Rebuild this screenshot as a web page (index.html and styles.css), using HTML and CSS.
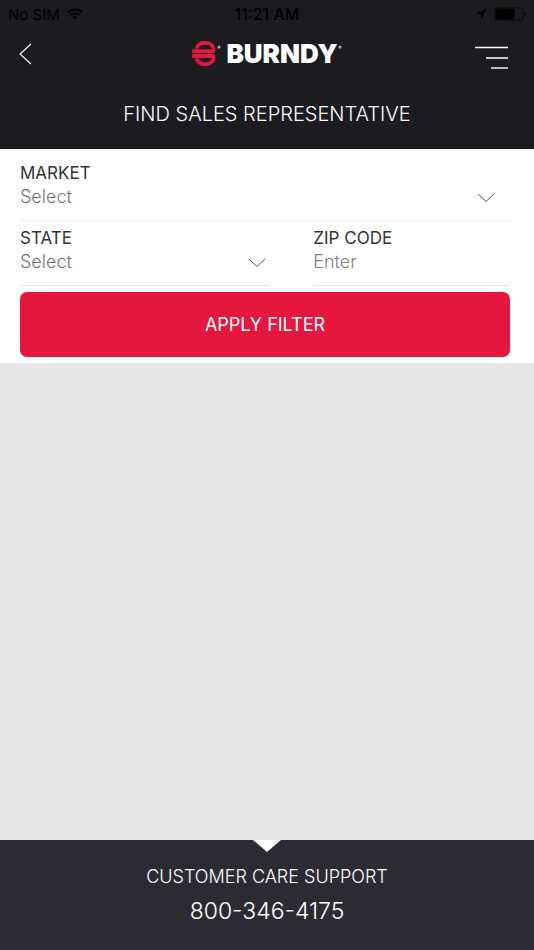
FILE: index.html
```html
<!DOCTYPE html>
<html lang="en">
<head>
<meta charset="utf-8">
<meta name="viewport" content="width=device-width, initial-scale=1">
<title>Find Sales Representative</title>
<link rel="stylesheet" href="styles.css">
</head>
<body>
<header class="header">
  <div class="status">
    <div class="status-left">
      <span>No SIM</span>
      <svg width="16" height="12" viewBox="0 0 16 12" aria-hidden="true"><g fill="none" stroke="#000" stroke-width="2"><path d="M1 4.300a10 10 0 0 1 14 0"/><path d="M3.700 7.200a6.200 6.200 0 0 1 8.600 0"/></g><path d="M5.500 9.200a3.600 3.600 0 0 1 5 0L8 11.800z"/></svg>
    </div>
    <span class="status-time">11:21 AM</span>
    <div class="status-right">
      <svg width="12" height="12" viewBox="0 0 12 12" aria-hidden="true"><path d="M11.500.5 6.400 11.500 6 6 .5 5.600z"/></svg>
      <svg width="32" height="14" viewBox="0 0 32 14" aria-hidden="true"><rect x="1" y="1" width="28" height="12" rx="2" fill="none" stroke="#000" stroke-opacity=".7"/><rect x="1.500" y="1.500" width="19" height="11" rx="1"/><path d="M30.500 5c2 .5 2 3.500 0 4z"/></svg>
    </div>
  </div>
  <nav class="nav">
    <button class="icon-button" type="button" aria-label="Back">
      <svg width="14" height="22" viewBox="0 0 14 22" aria-hidden="true"><path d="M12 1 1 11 12 21" fill="none" stroke="#fff" stroke-width="1.100"/></svg>
    </button>
    <a class="logo" href="#" aria-label="Burndy home">
      <svg width="30" height="26" viewBox="0 0 30 26" aria-hidden="true">
        <g fill="#e6173e"><path d="M2.800 7.500C4 2.500 7.500 0 12 0 19 0 23.400 3.500 23.400 8.300H19.800C19.500 5 17 3.800 13 3.800 9.500 3.800 7.500 4.800 6.800 7.500z"/><path d="M0 8.200H23.400C23.400 10.500 22.800 11.600 22 12.100H.3zM.3 13.100H22C22.800 13.600 23.400 14.700 23.400 16.900H0z"/><path d="M2.800 17.600H6.800C7.500 20.200 9.500 21.200 13 21.200 17 21.200 19.500 20 19.800 16.700H23.400C23.400 21.500 19 25 12 25 7.500 25 4 22.500 2.800 17.600z"/></g>
        <circle cx="27" cy="6" r="1.600" fill="#aaa"/>
      </svg>
      <span class="wordmark">BURNDY</span>
      <svg class="registered" width="4" height="4" viewBox="0 0 4 4" aria-hidden="true"><circle cx="2" cy="2" r="1.600" fill="#aaa"/></svg>
    </a>
    <button class="icon-button menu" type="button" aria-label="Menu">
      <svg width="33" height="24" viewBox="0 0 33 24" aria-hidden="true"><path d="M0 1.500h33M11 12h22" stroke="#fff" stroke-width="1.500"/><path d="M16 22h17" stroke="#bbb" stroke-width="2"/></svg>
    </button>
  </nav>
  <h1 class="title">FIND SALES REPRESENTATIVE</h1>
</header>
<form class="filter">
  <div class="field market">
    <label for="market">MARKET</label>
    <select id="market"><option>Select</option></select>
    <svg class="chevron" width="18" height="10" viewBox="0 0 18 10" aria-hidden="true"><path d="M1 1l8 7.500 8-7.500"/></svg>
  </div>
  <div class="field-row">
    <div class="field">
      <label for="state">STATE</label>
      <select id="state"><option>Select</option></select>
      <svg class="chevron" width="18" height="10" viewBox="0 0 18 10" aria-hidden="true"><path d="M1 1l8 7.500 8-7.500"/></svg>
    </div>
    <div class="field">
      <label for="zip">ZIP CODE</label>
      <input id="zip" type="text" placeholder="Enter">
    </div>
  </div>
  <button class="apply" type="button">APPLY FILTER</button>
</form>
<main class="results"></main>
<footer class="footer">
  <p class="support">CUSTOMER CARE SUPPORT</p>
  <a class="phone" href="tel:800-346-4175">800-346-4175</a>
</footer>
</body>
</html>
```
FILE: styles.css
```css
* {
  box-sizing: border-box;
}

body {
  display: flex;
  flex-direction: column;
  min-height: 100vh;
  margin: 0;
  background: #e6e6e6;
  font-family: Inter, "Liberation Sans", sans-serif;
  font-weight: 300;
}

.header {
  padding-bottom: 21px;
  background: #1c1b20;
  color: #fff;
}

.status {
  display: grid;
  grid-template-columns: 1fr auto 1fr;
  align-items: center;
  height: 28px;
  padding: 0 8px;
  color: #000;
  font-size: 15px;
  font-weight: 400;
}

.status-left,
.status-right {
  display: flex;
  align-items: center;
  gap: 7px;
}

.status-right {
  justify-content: flex-end;
}

.status-time {
  font-size: 16px;
  font-weight: 500;
}

.nav {
  display: grid;
  grid-template-columns: 1fr auto 1fr;
  align-items: center;
  height: 52px;
  padding: 0 19px;
}

.icon-button {
  display: flex;
  justify-self: start;
  padding: 0;
  border: 0;
  background: none;
}

.menu {
  justify-self: end;
  padding: 8px 7px 0 0;
}

.logo {
  display: flex;
  align-items: center;
  gap: 4px;
  color: #fff;
  text-decoration: none;
}

.wordmark {
  font-size: 26px;
  font-weight: 900;
  line-height: 28px;
}

.registered {
  align-self: flex-start;
  margin: 5px 0 0 -4px;
}

.title {
  margin: 20px 0 0;
  font-size: 20px;
  font-weight: 300;
  line-height: 28px;
  text-align: center;
}

.filter {
  padding: 13px 24px 6px 20px;
  background: #fff;
}

.field {
  position: relative;
  display: flex;
  flex-direction: column;
  min-width: 0;
  padding-bottom: 12px;
  border-bottom: 1px solid #e4e4e6;
}

.market {
  border-color: #f0f0f2;
}

.market .chevron {
  right: 15px;
}

.field-row {
  display: grid;
  grid-template-columns: 14fr 11fr;
  column-gap: 43px;
  padding-top: 6px;
}

.field label {
  color: #333;
  font-size: 17px;
  font-weight: 400;
  line-height: 22px;
}

.field select,
.field input {
  width: 100%;
  height: 24px;
  margin: 0;
  padding: 0;
  border: 0;
  background: none;
  color: #757575;
  font: inherit;
  font-size: 18px;
  appearance: none;
}

.field input::placeholder {
  color: #808080;
}

.chevron {
  position: absolute;
  right: 4px;
  bottom: 17px;
  fill: none;
  stroke: #555560;
  pointer-events: none;
}

.apply {
  width: 100%;
  height: 65px;
  margin-top: 6px;
  border: 0;
  border-radius: 7px;
  background: #e6173e;
  color: #fff;
  font: inherit;
  font-size: 18px;
  font-weight: 400;
}

.results {
  flex: 1;
}

.footer {
  position: relative;
  padding: 24px 0;
  background: #2c2b34;
  color: #fff;
  text-align: center;
}

.footer::before {
  content: "";
  position: absolute;
  top: 0;
  left: 50%;
  border: 14px solid transparent;
  border-top: 12px solid #fff;
  border-bottom: 0;
  transform: translateX(-50%);
}

.support {
  margin: 0 0 6px;
  font-size: 18px;
  line-height: 26px;
}

.phone {
  display: block;
  color: #fff;
  font-size: 23px;
  line-height: 30px;
  text-decoration: none;
}
```
